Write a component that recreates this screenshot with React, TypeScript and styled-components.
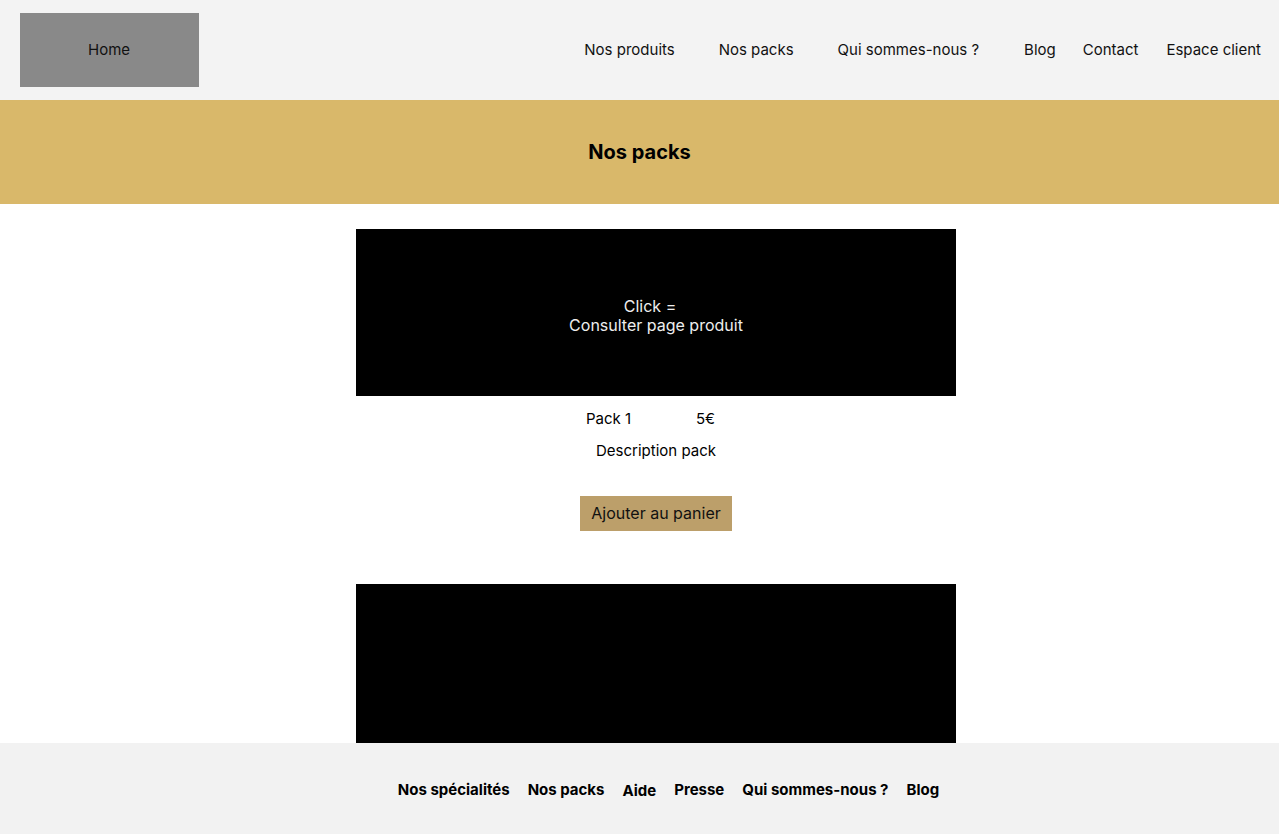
import React from "react";
import styled, { createGlobalStyle } from "styled-components";

const Global = createGlobalStyle`
  html, body { margin: 0; padding: 0; background: #ffffff; }
  body { font-family: Inter, "Noto Sans", "Liberation Sans", sans-serif; color: #000; }
  * { box-sizing: border-box; }
`;

const Header = styled.header`
  height: 100px;
  background: #f3f3f3;
  display: flex;
  align-items: center;
  justify-content: space-between;
  padding: 0 18px 0 20px;
`;

const HomeBox = styled.div`
  width: 179px;
  height: 74px;
  background: #898989;
  display: flex;
  align-items: center;
  justify-content: center;
  padding: 0 1px 2px 0;
  font-size: 15px;
  color: #111;
`;

const Nav = styled.nav`
  display: flex;
  align-items: center;
  padding-bottom: 2px;
`;

const NavItem = styled.a<{ $gap: number }>`
  font-size: 15px;
  color: #111;
  text-decoration: none;
  margin-left: ${(p) => p.$gap}px;
  white-space: nowrap;
`;

const Banner = styled.section`
  height: 104px;
  background: #d9b86a;
  display: flex;
  align-items: center;
  justify-content: center;
`;

const BannerTitle = styled.h1`
  margin: 0;
  font-size: 20px;
  font-weight: 700;
`;

const Main = styled.main`
  display: flex;
  flex-direction: column;
  align-items: center;
  padding: 25px 0 120px 33px;
`;

const Card = styled.article`
  display: flex;
  flex-direction: column;
  align-items: center;
  margin-bottom: 53px;
`;

const Visual = styled.div`
  width: 600px;
  height: 167px;
  background: #000;
  color: #eee;
  display: flex;
  align-items: center;
  justify-content: center;
  text-align: center;
  padding-top: 6px;
  font-size: 16px;
  line-height: 19px;
`;

const FirstLine = styled.span`
  padding-right: 12px;
`;

const InfoRow = styled.div`
  display: flex;
  gap: 65px;
  margin-top: 14px;
  font-size: 15px;
  line-height: 18px;
  padding-right: 11px;
`;

const Desc = styled.p`
  margin: 14px 0 0;
  font-size: 15px;
  line-height: 18px;
`;

const CartButton = styled.button`
  margin-top: 36px;
  width: 152px;
  height: 35px;
  border: none;
  background: #bc9f6a;
  font-family: inherit;
  font-size: 16px;
  color: #111;
  padding: 0 0 1px;
  cursor: pointer;
`;

const Footer = styled.footer`
  position: fixed;
  left: 0;
  right: 0;
  bottom: 0;
  height: 91px;
  background: #f2f2f2;
  display: flex;
  align-items: center;
  justify-content: center;
  padding: 2px 0 0 58px;
  gap: 18px;
`;

const FootItem = styled.a<{ $drop?: boolean }>`
  font-size: 15px;
  font-weight: 700;
  color: #000;
  text-decoration: none;
  position: relative;
  top: ${(p) => (p.$drop ? 1 : 0)}px;
  white-space: nowrap;
`;

const navItems: [string, number][] = [
  ["Nos produits", 0],
  ["Nos packs", 44],
  ["Qui sommes-nous ?", 44],
  ["Blog", 45],
  ["Contact", 27],
  ["Espace client", 28],
];

const footItems = ["Nos spécialités", "Nos packs", "Aide", "Presse", "Qui sommes-nous ?", "Blog"];

export default function App() {
  return (
    <>
      <Global />
      <Header>
        <HomeBox>Home</HomeBox>
        <Nav>
          {navItems.map(([t, g]) => (
            <NavItem key={t} $gap={g}>
              {t}
            </NavItem>
          ))}
        </Nav>
      </Header>
      <Banner>
        <BannerTitle>Nos packs</BannerTitle>
      </Banner>
      <Main>
        <Card>
          <Visual>
            <div>
              <FirstLine>Click =</FirstLine>
              <br />
              Consulter page produit
            </div>
          </Visual>
          <InfoRow>
            <span>Pack 1</span>
            <span>5€</span>
          </InfoRow>
          <Desc>Description pack</Desc>
          <CartButton>Ajouter au panier</CartButton>
        </Card>
        <Card>
          <Visual />
        </Card>
      </Main>
      <Footer>
        {footItems.map((t) => (
          <FootItem key={t} $drop={t === "Aide"}>
            {t}
          </FootItem>
        ))}
      </Footer>
    </>
  );
}
